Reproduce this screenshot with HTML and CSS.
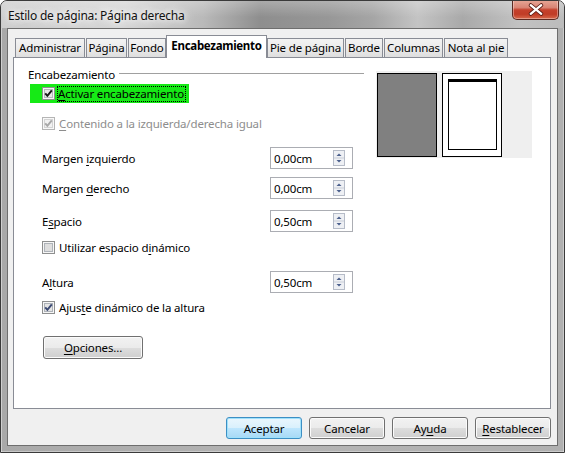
FILE: index.html
```html
<!DOCTYPE html>
<html lang="es">
<head>
<meta charset="utf-8">
<title>Estilo de página: Página derecha</title>
<link rel="stylesheet" href="styles.css">
</head>
<body>
<div class="window">
  <div class="titlebar">
    <span class="title">Estilo de página: Página derecha</span>
    <div class="close">
      <svg width="47" height="19" viewBox="0 0 47 19">
        <path d="M18.5 5 L29.5 14 M29.5 5 L18.5 14" stroke="#5a1c14" stroke-width="4.2" stroke-linecap="round" fill="none"/>
        <path d="M18.5 5 L29.5 14 M29.5 5 L18.5 14" stroke="#ffffff" stroke-width="2.4" stroke-linecap="round" fill="none"/>
      </svg>
    </div>
  </div>
  <div class="client">
    <div class="tabs">
      <div class="tab">Administrar</div>
      <div class="tab">Página</div>
      <div class="tab">Fondo</div>
      <div class="tab active">Encabezamiento</div>
      <div class="tab">Pie de página</div>
      <div class="tab">Borde</div>
      <div class="tab">Columnas</div>
      <div class="tab">Nota al pie</div>
    </div>
    <div class="panel">
      <div class="form">
        <div class="group-head"><span>Encabezamiento</span><span class="rule"></span></div>

        <div class="row focus-row">
          <span class="highlight">
            <svg class="cb" width="13" height="13" viewBox="0 0 13 13">
              <rect x="0.5" y="0.5" width="12" height="12" fill="#f6f6f6" stroke="#8e8f8f"/>
              <rect x="2.5" y="2.5" width="8" height="8" fill="#e8e8e8" stroke="#b4b8bd"/>
              <path d="M3.2 6.3 L5.4 8.8 L9.8 3.4" stroke="#1b1b1b" stroke-width="2" fill="none"/>
            </svg>
            <span class="focus-text"><u>A</u>ctivar encabezamiento</span>
          </span>
        </div>

        <div class="row check-row disabled">
          <svg class="cb" width="13" height="13" viewBox="0 0 13 13">
            <rect x="0.5" y="0.5" width="12" height="12" fill="#f8f8f8" stroke="#b5b5b5"/>
            <rect x="2.5" y="2.5" width="8" height="8" fill="#f2f2f2" stroke="#d4d4d4"/>
            <path d="M3.2 6.3 L5.4 8.8 L9.8 3.4" stroke="#a8a8a8" stroke-width="2" fill="none"/>
          </svg>
          <span><u>C</u>ontenido a la izquierda/derecha igual</span>
        </div>

        <div class="row spin-row">
          <span class="label">Margen <u>i</u>zquierdo</span>
          <div class="spin">
            <span class="spin-value">0,00cm</span>
            <svg class="spin-btn" width="12" height="16" viewBox="0 0 12 16">
              <rect x="0.5" y="0.5" width="11" height="15" fill="#eef0f4" stroke="#b6bcc8"/>
              <line x1="1" y1="8" x2="11" y2="8" stroke="#c9ced8"/>
              <path d="M3.5 6 L6 3.5 L8.5 6 Z" fill="#4b5f8c"/>
              <path d="M3.5 10 L6 12.5 L8.5 10 Z" fill="#4b5f8c"/>
            </svg>
          </div>
        </div>

        <div class="row spin-row">
          <span class="label">Margen <u>d</u>erecho</span>
          <div class="spin">
            <span class="spin-value">0,00cm</span>
            <svg class="spin-btn" width="12" height="16" viewBox="0 0 12 16">
              <rect x="0.5" y="0.5" width="11" height="15" fill="#eef0f4" stroke="#b6bcc8"/>
              <line x1="1" y1="8" x2="11" y2="8" stroke="#c9ced8"/>
              <path d="M3.5 6 L6 3.5 L8.5 6 Z" fill="#4b5f8c"/>
              <path d="M3.5 10 L6 12.5 L8.5 10 Z" fill="#4b5f8c"/>
            </svg>
          </div>
        </div>

        <div class="row spin-row">
          <span class="label">E<u>s</u>pacio</span>
          <div class="spin">
            <span class="spin-value">0,50cm</span>
            <svg class="spin-btn" width="12" height="16" viewBox="0 0 12 16">
              <rect x="0.5" y="0.5" width="11" height="15" fill="#eef0f4" stroke="#b6bcc8"/>
              <line x1="1" y1="8" x2="11" y2="8" stroke="#c9ced8"/>
              <path d="M3.5 6 L6 3.5 L8.5 6 Z" fill="#4b5f8c"/>
              <path d="M3.5 10 L6 12.5 L8.5 10 Z" fill="#4b5f8c"/>
            </svg>
          </div>
        </div>

        <div class="row check-row">
          <svg class="cb" width="13" height="13" viewBox="0 0 13 13">
            <rect x="0.5" y="0.5" width="12" height="12" fill="#f6f6f6" stroke="#8e8f8f"/>
            <rect x="2.5" y="2.5" width="8" height="8" fill="#dedede" stroke="#aeb3b9"/>
          </svg>
          <span>Utilizar espacio d<u>i</u>námico</span>
        </div>

        <div class="row spin-row">
          <span class="label">A<u>l</u>tura</span>
          <div class="spin">
            <span class="spin-value">0,50cm</span>
            <svg class="spin-btn" width="12" height="16" viewBox="0 0 12 16">
              <rect x="0.5" y="0.5" width="11" height="15" fill="#eef0f4" stroke="#b6bcc8"/>
              <line x1="1" y1="8" x2="11" y2="8" stroke="#c9ced8"/>
              <path d="M3.5 6 L6 3.5 L8.5 6 Z" fill="#4b5f8c"/>
              <path d="M3.5 10 L6 12.5 L8.5 10 Z" fill="#4b5f8c"/>
            </svg>
          </div>
        </div>

        <div class="row check-row">
          <svg class="cb" width="13" height="13" viewBox="0 0 13 13">
            <rect x="0.5" y="0.5" width="12" height="12" fill="#f6f6f6" stroke="#8e8f8f"/>
            <rect x="2.5" y="2.5" width="8" height="8" fill="#e4e4e4" stroke="#aeb3b9"/>
            <path d="M3.2 6.3 L5.4 8.8 L9.8 3.4" stroke="#3c4a74" stroke-width="2" fill="none"/>
          </svg>
          <span>Ajus<u>t</u>e dinámico de la altura</span>
        </div>

        <div class="row btn-row">
          <button class="btn btn-options"><span><u>O</u>pciones...</span></button>
        </div>
      </div>

      <div class="preview">
        <div class="pv-left"></div>
        <div class="pv-page"><div class="pv-inner"></div></div>
      </div>
    </div>

    <div class="actions">
      <button class="btn btn-action default">Aceptar</button>
      <button class="btn btn-action">Cancelar</button>
      <button class="btn btn-action">Ay<u>u</u>da</button>
      <button class="btn btn-action"><u>R</u>establecer</button>
    </div>
  </div>
</div>
</body>
</html>
```

FILE: styles.css
```css
* { box-sizing: border-box; }
html, body { margin: 0; padding: 0; }
body {
  width: 565px;
  height: 453px;
  overflow: hidden;
  background: #ffffff;
  font-family: "Noto Sans", "Open Sans", sans-serif;
  font-size: 11.5px;
  letter-spacing: -0.15px;
  color: #000;
}
u { text-decoration: underline; text-underline-offset: 2px; }

.window {
  width: 565px;
  height: 453px;
  border: 1px solid #3a3a3a;
  border-radius: 7px 7px 0 0;
  overflow: hidden;
  display: flex;
  flex-direction: column;
  background: linear-gradient(90deg, #a9a9a9 0%, #b4b4b4 50%, #b0b0b0 100%);
  box-shadow: inset 1px 0 0 rgba(255,255,255,.45), inset -1px 0 0 rgba(255,255,255,.35), inset 0 -1px 0 rgba(255,255,255,.35);
}

.titlebar {
  height: 27px;
  flex: none;
  display: flex;
  align-items: flex-start;
  justify-content: space-between;
  padding-left: 7px;
  background:
    linear-gradient(180deg, rgba(255,255,255,.25) 0%, rgba(255,255,255,0) 60%),
    linear-gradient(90deg, #cdcdcd 0%, #d6d6d6 22%, #b9b9b9 36%, #8e8e8e 46%, #979797 58%, #a5a5a5 66%, #c4c4c4 74%, #a9a9a9 82%, #c2c2c2 92%, #bcbcbc 100%);
}
.title {
  font-size: 12px;
  letter-spacing: -0.2px;
  line-height: 29px;
  color: #111;
  white-space: nowrap;
  text-shadow: 0 0 6px #fff, 0 0 10px #fff, 0 0 14px rgba(255,255,255,.9);
}
.close {
  width: 47px;
  height: 20px;
  margin-top: -1px;
  margin-right: 5px;
  border: 1px solid #5c2a22;
  border-top: 0;
  border-radius: 0 0 5px 5px;
  background: linear-gradient(180deg, #e8a898 0%, #d98474 40%, #c5412c 52%, #c03c26 75%, #d8694c 100%);
  box-shadow: inset 0 0 0 1px rgba(255,255,255,.35);
  display: flex;
  align-items: center;
  justify-content: center;
}
.close svg { display: block; }

.client {
  flex: 1;
  margin: 0 6px 6px;
  border: 1px solid #6e6e6e;
  background: #f0f0f0;
  display: flex;
  flex-direction: column;
}

.tabs {
  height: 22px;
  margin: 6px 0 0 7px;
  display: flex;
  align-items: flex-end;
  gap: 1px;
  position: relative;
  z-index: 1;
}
.tab {
  height: 19px;
  border: 1px solid #898c95;
  border-bottom: 0;
  background: linear-gradient(180deg, #f3f3f3 0%, #ebebeb 50%, #dedede 100%);
  display: flex;
  align-items: center;
  justify-content: center;
  white-space: nowrap;
  line-height: 1;
}
.tab:nth-child(1) { width: 70px; }
.tab:nth-child(2) { width: 41px; }
.tab:nth-child(3) { width: 38px; }
.tab:nth-child(4) { width: 101px; }
.tab:nth-child(5) { width: 77px; }
.tab:nth-child(6) { width: 38px; }
.tab:nth-child(7) { width: 59px; }
.tab:nth-child(8) { width: 64px; }
.tab.active {
  height: 23px;
  margin: 0 -1px -1px;
  background: #fff;
  font-weight: bold;
  letter-spacing: -0.3px;
  padding-bottom: 2px;
}

.panel {
  height: 352px;
  flex: none;
  margin: 0 6px 0 5px;
  border: 1px solid #898c95;
  background: #fff;
  display: flex;
  align-items: flex-start;
  padding-left: 14px;
}

.form {
  width: 336px;
  display: flex;
  flex-direction: column;
}
.group-head {
  height: 14px;
  margin-top: 9px;
  display: flex;
  align-items: center;
  gap: 4px;
  white-space: nowrap;
}
.group-head .rule {
  flex: 1;
  height: 1px;
  background: #a0a0a0;
  margin-top: -1px;
}

.row { display: flex; align-items: center; white-space: nowrap; }
.form > .row:nth-child(2) { margin-top: 3px; }
.form > .row:nth-child(3) { margin-top: 11px; }
.form > .row:nth-child(4) { margin-top: 14px; }
.form > .row:nth-child(5) { margin-top: 8px; }
.form > .row:nth-child(6) { margin-top: 11px; }
.form > .row:nth-child(7) { margin-top: 6px; }
.form > .row:nth-child(8) { margin-top: 15px; }
.form > .row:nth-child(9) { margin-top: 5px; }
.form > .row:nth-child(10) { margin-top: 20px; }

.focus-row { height: 19px; padding-left: 2px; }
.highlight {
  height: 19px;
  display: flex;
  align-items: center;
  background: #16ea16;
  padding: 0 3px 0 12px;
}
.cb { display: block; flex: none; }
.focus-text {
  margin-left: 2px;
  height: 16px;
  display: flex;
  align-items: center;
  padding: 0 1px 0 0;
  border: 1px dotted #000;
}

.check-row { height: 18px; padding-left: 14px; gap: 4px; }
.form > .row:nth-child(3) { height: 19px; }
.disabled { color: #8d8d8d; }

.spin-row { height: 22px; padding-left: 14px; }
.label { width: 228px; flex: none; }
.spin {
  width: 83px;
  height: 22px;
  border: 1px solid #abadb3;
  background: #fff;
  display: flex;
  align-items: center;
  justify-content: space-between;
  padding: 0 7px 0 3px;
}
.spin-btn { display: block; }

.btn {
  font: inherit;
  letter-spacing: inherit;
  color: #000;
  padding: 0;
  border: 1px solid #707070;
  border-radius: 3px;
  background: linear-gradient(180deg, #f2f2f2 0%, #ebebeb 50%, #dddddd 51%, #cfcfcf 100%);
  box-shadow: inset 0 0 0 1px #fbfbfb;
  display: flex;
  align-items: center;
  justify-content: center;
  white-space: nowrap;
}
.btn-row { padding-left: 15px; }
.btn-options { width: 100px; height: 23px; }

.preview {
  width: 156px;
  height: 87px;
  margin: 13px 0 0 12px;
  background: #efefef;
  display: flex;
  align-items: flex-start;
  gap: 5px;
  padding: 2px 0 0 1px;
}
.pv-left {
  width: 60px;
  height: 84px;
  background: #808080;
  border: 1px solid #000;
}
.pv-page {
  width: 60px;
  height: 84px;
  background: #fff;
  border: 1px solid #000;
  padding: 5px 4px 6px 5px;
}
.pv-inner {
  height: 100%;
  border: 1px solid #000;
  border-top-width: 3px;
}

.actions {
  margin: 8px 6px 0 0;
  display: flex;
  justify-content: flex-end;
  gap: 7px;
}
.btn-action { width: 76px; height: 22px; }
.btn-action.default {
  border-color: #3c8fc4;
  background: linear-gradient(180deg, #eaf6fd 0%, #d9f0fc 50%, #bee6fd 51%, #a7d9f5 100%);
  box-shadow: inset 0 0 0 1px #9fe1fb;
}
```
